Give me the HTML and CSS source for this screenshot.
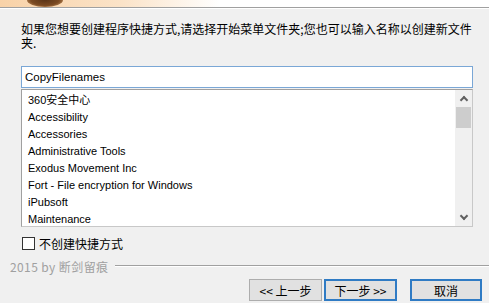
FILE: index.html
```html
<!DOCTYPE html>
<html lang="zh-CN">
<head>
    <meta charset="UTF-8">
    <title>选择开始菜单文件夹</title>
    <link rel="stylesheet" href="styles.css">
</head>
<body>
    <div class="banner"><span class="logo"></span></div>
    <div class="sep"></div>
    <div class="page">
        <p class="intro">如果您想要创建程序快捷方式,请选择开始菜单文件夹;您也可以输入名称以创建新文件夹.</p>
        <div class="folder-input">CopyFilenames</div>
        <div class="listbox">
            <ul class="items">
                <li>360安全中心</li>
                <li>Accessibility</li>
                <li>Accessories</li>
                <li>Administrative Tools</li>
                <li>Exodus Movement Inc</li>
                <li>Fort - File encryption for Windows</li>
                <li>iPubsoft</li>
                <li>Maintenance</li>
            </ul>
            <div class="scrollbar">
                <span class="arrow up"></span>
                <span class="thumb"></span>
                <span class="track"></span>
                <span class="arrow down"></span>
            </div>
        </div>
        <label class="check"><span class="box"></span>不创建快捷方式</label>
    </div>
    <div class="footer">
        <span class="brand">2015 by 断剑留痕</span>
        <span class="rule"></span>
    </div>
    <div class="buttons">
        <button class="btn">&lt;&lt; 上一步</button>
        <button class="btn default">下一步 &gt;&gt;</button>
        <button class="btn default cancel">取消</button>
    </div>
</body>
</html>
```
FILE: styles.css
```css
body {
    margin: 0;
    background: #f0f0f0;
    font-family: "Liberation Sans", "Noto Sans CJK SC", sans-serif;
    font-size: 11px;
    color: #000;
    overflow: hidden;
}
.banner {
    height: 7px;
    background: linear-gradient(to right, #f8d2a8 0%, #fbe3c8 25%, #ffffff 45%, #ffffff 100%);
    overflow: hidden;
}
.logo {
    display: block;
    width: 36px;
    height: 14px;
    margin: -7px 0 0 27px;
    border-radius: 50%;
    background: radial-gradient(ellipse at center, #5a3418 0%, #7b4a22 55%, #e4b27c 100%);
}
.sep {
    border-top: 1px solid #a0a0a0;
    border-bottom: 1px solid #ffffff;
}
.page {
    padding: 0 16px 0 21px;
}
.intro {
    margin: 13px -6px 0 0;
    line-height: 14px;
    font-family: "Noto Sans CJK SC", sans-serif;
    font-size: 12px;
}
.folder-input {
    margin-top: 16px;
    height: 20px;
    line-height: 20px;
    padding: 0 3px;
    background: #fff;
    border: 1px solid #7aa7d6;
    font-size: 11.5px;
}
.listbox {
    margin-top: 1px;
    height: 136px;
    display: flex;
    background: #fff;
    border: 1px solid #a0a0a0;
    border-right-color: #c8c8c8;
    border-bottom-color: #c8c8c8;
}
.items {
    flex: 1;
    margin: 0;
    padding: 2px 0 0 6px;
    list-style: none;
}
.items li {
    height: 17px;
    line-height: 17px;
    white-space: nowrap;
}
.scrollbar {
    width: 17px;
    display: flex;
    flex-direction: column;
    background: #f0f0f0;
}
.arrow {
    height: 17px;
    position: relative;
}
.arrow::after {
    content: "";
    position: absolute;
    left: 6px;
    width: 4px;
    height: 4px;
    border-left: 2px solid #606060;
    border-top: 2px solid #606060;
}
.arrow.up::after {
    top: 7px;
    transform: rotate(45deg);
}
.arrow.down::after {
    top: 4px;
    transform: rotate(225deg);
}
.thumb {
    height: 21px;
    margin: 0 1px;
    background: #cdcdcd;
}
.track {
    flex: 1;
}
.check {
    display: flex;
    align-items: center;
    gap: 4px;
    margin-top: 9px;
    padding-left: 1px;
    height: 14px;
    font-family: "Noto Sans CJK SC", sans-serif;
    font-size: 12px;
}
.box {
    width: 11px;
    height: 11px;
    background: #fff;
    border: 1px solid #333;
}
.footer {
    display: flex;
    align-items: center;
    gap: 7px;
    margin-top: 9px;
    padding-left: 10px;
    height: 14px;
}
.brand {
    color: #a0a0a0;
    font-family: "Noto Sans CJK SC", sans-serif;
    font-size: 12px;
    letter-spacing: 0.4px;
}
.rule {
    flex: 1;
    border-top: 1px solid #a0a0a0;
    border-bottom: 1px solid #fff;
}
.buttons {
    display: flex;
    margin-top: 6px;
    padding-left: 249px;
}
.btn {
    width: 73px;
    height: 22px;
    padding: 0;
    background: #e1e1e1;
    border: 1px solid #adadad;
    font-family: "Noto Sans CJK SC", sans-serif;
    font-size: 12px;
    color: #000;
}
.btn + .btn {
    margin-left: 2px;
}
.btn.default {
    border: 2px solid #2f7bc4;
}
.btn.cancel {
    margin-left: 13px;
    width: 72px;
}
```
